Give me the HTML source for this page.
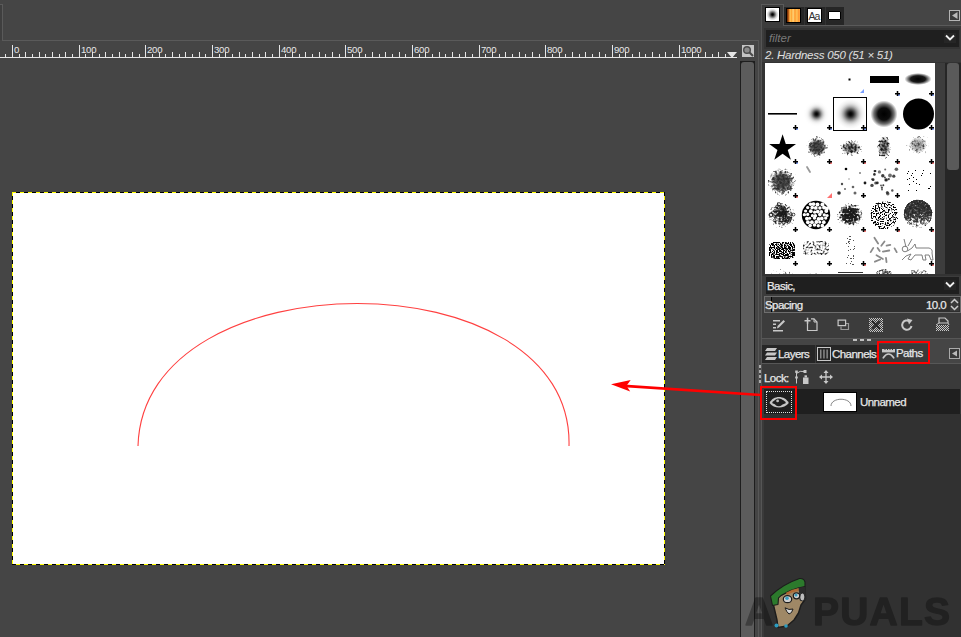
<!DOCTYPE html><html><head><meta charset="utf-8"><style>
*{margin:0;padding:0;box-sizing:border-box}
html,body{width:961px;height:637px;overflow:hidden;background:#454545;font-family:"Liberation Sans", sans-serif;}
.a{position:absolute}
.rl{position:absolute;top:44px;font-size:9.6px;color:#e8e8e8;line-height:12px;letter-spacing:-0.25px}
.t{position:absolute;font-size:11.5px;color:#e6e6e6;line-height:13px;white-space:nowrap;letter-spacing:-0.55px;-webkit-text-stroke:0.25px currentColor}
</style></head><body><div class="a" style="left:0;top:5px;width:2px;height:35px;background:#3f3f3f"></div><div class="a" style="left:0;top:4px;width:3px;height:1px;background:#5a5a5a"></div><div class="a" style="left:2px;top:4px;width:1px;height:37px;background:#5a5a5a"></div><div class="a" style="left:2px;top:40px;width:757px;height:1px;background:#5a5a5a"></div><div class="a" style="left:758px;top:40px;width:1px;height:597px;background:#575757"></div><div class="a" style="left:761px;top:4px;width:1px;height:633px;background:#555"></div><svg style="position:absolute;left:0;top:41px" width="740" height="20" shape-rendering="crispEdges"><rect x="0" y="16" width="737" height="1" fill="#e6e6e6"/><rect x="5" y="13" width="1" height="3" fill="#e6e6e6"/><rect x="12" y="4" width="1" height="12" fill="#e6e6e6"/><rect x="19" y="13" width="1" height="3" fill="#e6e6e6"/><rect x="25" y="11" width="1" height="5" fill="#e6e6e6"/><rect x="32" y="13" width="1" height="3" fill="#e6e6e6"/><rect x="39" y="11" width="1" height="5" fill="#e6e6e6"/><rect x="45" y="13" width="1" height="3" fill="#e6e6e6"/><rect x="52" y="11" width="1" height="5" fill="#e6e6e6"/><rect x="59" y="13" width="1" height="3" fill="#e6e6e6"/><rect x="65" y="11" width="1" height="5" fill="#e6e6e6"/><rect x="72" y="13" width="1" height="3" fill="#e6e6e6"/><rect x="79" y="4" width="1" height="12" fill="#e6e6e6"/><rect x="85" y="13" width="1" height="3" fill="#e6e6e6"/><rect x="92" y="11" width="1" height="5" fill="#e6e6e6"/><rect x="99" y="13" width="1" height="3" fill="#e6e6e6"/><rect x="105" y="11" width="1" height="5" fill="#e6e6e6"/><rect x="112" y="13" width="1" height="3" fill="#e6e6e6"/><rect x="119" y="11" width="1" height="5" fill="#e6e6e6"/><rect x="125" y="13" width="1" height="3" fill="#e6e6e6"/><rect x="132" y="11" width="1" height="5" fill="#e6e6e6"/><rect x="139" y="13" width="1" height="3" fill="#e6e6e6"/><rect x="145" y="4" width="1" height="12" fill="#e6e6e6"/><rect x="152" y="13" width="1" height="3" fill="#e6e6e6"/><rect x="159" y="11" width="1" height="5" fill="#e6e6e6"/><rect x="165" y="13" width="1" height="3" fill="#e6e6e6"/><rect x="172" y="11" width="1" height="5" fill="#e6e6e6"/><rect x="179" y="13" width="1" height="3" fill="#e6e6e6"/><rect x="185" y="11" width="1" height="5" fill="#e6e6e6"/><rect x="192" y="13" width="1" height="3" fill="#e6e6e6"/><rect x="199" y="11" width="1" height="5" fill="#e6e6e6"/><rect x="205" y="13" width="1" height="3" fill="#e6e6e6"/><rect x="212" y="4" width="1" height="12" fill="#e6e6e6"/><rect x="219" y="13" width="1" height="3" fill="#e6e6e6"/><rect x="225" y="11" width="1" height="5" fill="#e6e6e6"/><rect x="232" y="13" width="1" height="3" fill="#e6e6e6"/><rect x="239" y="11" width="1" height="5" fill="#e6e6e6"/><rect x="245" y="13" width="1" height="3" fill="#e6e6e6"/><rect x="252" y="11" width="1" height="5" fill="#e6e6e6"/><rect x="259" y="13" width="1" height="3" fill="#e6e6e6"/><rect x="265" y="11" width="1" height="5" fill="#e6e6e6"/><rect x="272" y="13" width="1" height="3" fill="#e6e6e6"/><rect x="279" y="4" width="1" height="12" fill="#e6e6e6"/><rect x="285" y="13" width="1" height="3" fill="#e6e6e6"/><rect x="292" y="11" width="1" height="5" fill="#e6e6e6"/><rect x="299" y="13" width="1" height="3" fill="#e6e6e6"/><rect x="305" y="11" width="1" height="5" fill="#e6e6e6"/><rect x="312" y="13" width="1" height="3" fill="#e6e6e6"/><rect x="319" y="11" width="1" height="5" fill="#e6e6e6"/><rect x="325" y="13" width="1" height="3" fill="#e6e6e6"/><rect x="332" y="11" width="1" height="5" fill="#e6e6e6"/><rect x="339" y="13" width="1" height="3" fill="#e6e6e6"/><rect x="345" y="4" width="1" height="12" fill="#e6e6e6"/><rect x="352" y="13" width="1" height="3" fill="#e6e6e6"/><rect x="359" y="11" width="1" height="5" fill="#e6e6e6"/><rect x="365" y="13" width="1" height="3" fill="#e6e6e6"/><rect x="372" y="11" width="1" height="5" fill="#e6e6e6"/><rect x="379" y="13" width="1" height="3" fill="#e6e6e6"/><rect x="385" y="11" width="1" height="5" fill="#e6e6e6"/><rect x="392" y="13" width="1" height="3" fill="#e6e6e6"/><rect x="399" y="11" width="1" height="5" fill="#e6e6e6"/><rect x="405" y="13" width="1" height="3" fill="#e6e6e6"/><rect x="412" y="4" width="1" height="12" fill="#e6e6e6"/><rect x="419" y="13" width="1" height="3" fill="#e6e6e6"/><rect x="425" y="11" width="1" height="5" fill="#e6e6e6"/><rect x="432" y="13" width="1" height="3" fill="#e6e6e6"/><rect x="439" y="11" width="1" height="5" fill="#e6e6e6"/><rect x="445" y="13" width="1" height="3" fill="#e6e6e6"/><rect x="452" y="11" width="1" height="5" fill="#e6e6e6"/><rect x="459" y="13" width="1" height="3" fill="#e6e6e6"/><rect x="465" y="11" width="1" height="5" fill="#e6e6e6"/><rect x="472" y="13" width="1" height="3" fill="#e6e6e6"/><rect x="479" y="4" width="1" height="12" fill="#e6e6e6"/><rect x="485" y="13" width="1" height="3" fill="#e6e6e6"/><rect x="492" y="11" width="1" height="5" fill="#e6e6e6"/><rect x="499" y="13" width="1" height="3" fill="#e6e6e6"/><rect x="505" y="11" width="1" height="5" fill="#e6e6e6"/><rect x="512" y="13" width="1" height="3" fill="#e6e6e6"/><rect x="519" y="11" width="1" height="5" fill="#e6e6e6"/><rect x="525" y="13" width="1" height="3" fill="#e6e6e6"/><rect x="532" y="11" width="1" height="5" fill="#e6e6e6"/><rect x="539" y="13" width="1" height="3" fill="#e6e6e6"/><rect x="545" y="4" width="1" height="12" fill="#e6e6e6"/><rect x="552" y="13" width="1" height="3" fill="#e6e6e6"/><rect x="559" y="11" width="1" height="5" fill="#e6e6e6"/><rect x="565" y="13" width="1" height="3" fill="#e6e6e6"/><rect x="572" y="11" width="1" height="5" fill="#e6e6e6"/><rect x="579" y="13" width="1" height="3" fill="#e6e6e6"/><rect x="585" y="11" width="1" height="5" fill="#e6e6e6"/><rect x="592" y="13" width="1" height="3" fill="#e6e6e6"/><rect x="599" y="11" width="1" height="5" fill="#e6e6e6"/><rect x="605" y="13" width="1" height="3" fill="#e6e6e6"/><rect x="612" y="4" width="1" height="12" fill="#e6e6e6"/><rect x="619" y="13" width="1" height="3" fill="#e6e6e6"/><rect x="625" y="11" width="1" height="5" fill="#e6e6e6"/><rect x="632" y="13" width="1" height="3" fill="#e6e6e6"/><rect x="639" y="11" width="1" height="5" fill="#e6e6e6"/><rect x="645" y="13" width="1" height="3" fill="#e6e6e6"/><rect x="652" y="11" width="1" height="5" fill="#e6e6e6"/><rect x="659" y="13" width="1" height="3" fill="#e6e6e6"/><rect x="665" y="11" width="1" height="5" fill="#e6e6e6"/><rect x="672" y="13" width="1" height="3" fill="#e6e6e6"/><rect x="679" y="4" width="1" height="12" fill="#e6e6e6"/><rect x="685" y="13" width="1" height="3" fill="#e6e6e6"/><rect x="692" y="11" width="1" height="5" fill="#e6e6e6"/><rect x="698" y="13" width="1" height="3" fill="#e6e6e6"/><rect x="705" y="11" width="1" height="5" fill="#e6e6e6"/><rect x="712" y="13" width="1" height="3" fill="#e6e6e6"/><rect x="718" y="11" width="1" height="5" fill="#e6e6e6"/><rect x="725" y="13" width="1" height="3" fill="#e6e6e6"/><rect x="732" y="11" width="1" height="5" fill="#e6e6e6"/></svg><div class="rl" style="left:14px">0</div><div class="rl" style="left:81px">100</div><div class="rl" style="left:147px">200</div><div class="rl" style="left:214px">300</div><div class="rl" style="left:281px">400</div><div class="rl" style="left:347px">500</div><div class="rl" style="left:414px">600</div><div class="rl" style="left:481px">700</div><div class="rl" style="left:547px">800</div><div class="rl" style="left:614px">900</div><div class="rl" style="left:681px">1000</div><svg style="position:absolute;left:726px;top:51px" width="12" height="8"><polygon points="1,1 11,1 6,7" fill="#e6e6e6"/></svg><div class="a" style="left:742px;top:45px;width:12px;height:12px;background:#c4c4c4"></div><svg class="a" style="left:742px;top:45px" width="12" height="12"><circle cx="5" cy="5" r="3.3" fill="#8a8a8a" stroke="#4a4a4a" stroke-width="1.4"/><line x1="7.3" y1="7.3" x2="11" y2="11" stroke="#4a4a4a" stroke-width="2"/></svg><div class="a" style="left:740px;top:61px;width:15px;height:576px;background:#1e1e1e"></div><div class="a" style="left:741px;top:62px;width:13px;height:575px;background:#5c5c5c;border-radius:3px 3px 0 0"></div><div class="a" style="left:12px;top:192px;width:653px;height:373px;background:#fff;border:1px dashed #000"></div><svg class="a" style="left:0;top:0" width="740" height="637"><defs><pattern id="dh" width="8" height="1" patternUnits="userSpaceOnUse"><rect width="4" height="1" fill="#000"/><rect x="4" width="4" height="1" fill="#ffff00"/></pattern><pattern id="dv" width="1" height="8" patternUnits="userSpaceOnUse"><rect width="1" height="4" fill="#000"/><rect y="4" width="1" height="4" fill="#ffff00"/></pattern><pattern id="dh2" width="8" height="1" patternUnits="userSpaceOnUse"><rect width="4" height="1" fill="#ffff00"/><rect x="4" width="4" height="1" fill="#000"/></pattern><pattern id="dv2" width="1" height="8" patternUnits="userSpaceOnUse"><rect width="1" height="4" fill="#ffff00"/><rect y="4" width="1" height="4" fill="#000"/></pattern></defs><g shape-rendering="crispEdges"><rect x="12" y="192" width="1" height="373" fill="url(#dv2)"/><rect x="664" y="192" width="1" height="373" fill="url(#dv)"/><rect x="12" y="192" width="653" height="1" fill="url(#dh)"/><rect x="12" y="564" width="653" height="1" fill="url(#dh2)"/></g><path d="M138,446 C143,256 574,256 569,446" fill="none" stroke="#ff4040" stroke-width="1.1"/></svg><div class="a" style="left:761px;top:4px;width:23px;height:1px;background:#5a5a5a"></div><div class="a" style="left:783px;top:4px;width:1px;height:22px;background:#5a5a5a"></div><div class="a" style="left:762px;top:5px;width:21px;height:21px;background:#3c3c3c"></div><div class="a" style="left:784px;top:7px;width:60px;height:18px;background:#262626"></div><div class="a" style="left:804px;top:7px;width:1px;height:18px;background:#333"></div><div class="a" style="left:825px;top:7px;width:1px;height:18px;background:#333"></div><div class="a" style="left:783px;top:25px;width:178px;height:1px;background:#5a5a5a"></div><svg class="a" style="left:765px;top:7px" width="15" height="15"><defs><radialGradient id="bi"><stop offset="0" stop-color="#000"/><stop offset=".15" stop-color="#000" stop-opacity=".95"/><stop offset=".4" stop-color="#000" stop-opacity=".6"/><stop offset=".7" stop-color="#000" stop-opacity=".2"/><stop offset="1" stop-color="#000" stop-opacity="0"/></radialGradient></defs><rect x="0.5" y="0.5" width="14" height="14" fill="#fff" stroke="#000"/><circle cx="7.5" cy="7.5" r="6" fill="url(#bi)"/></svg><svg class="a" style="left:786px;top:8px" width="15" height="15"><defs><linearGradient id="gi"><stop offset="0" stop-color="#5a2204"/><stop offset=".1" stop-color="#8a3a08"/><stop offset=".2" stop-color="#e8862a"/><stop offset=".25" stop-color="#ffcc60"/><stop offset=".36" stop-color="#ffa838"/><stop offset=".48" stop-color="#ffd478"/><stop offset=".6" stop-color="#ff9a30"/><stop offset=".74" stop-color="#ffc458"/><stop offset=".88" stop-color="#ff9230"/><stop offset="1" stop-color="#ffbc50"/></linearGradient></defs><rect x="0.5" y="0.5" width="14" height="14" fill="url(#gi)" stroke="#000"/></svg><div class="a" style="left:807px;top:8px;width:15px;height:15px;background:#fff;border:1px solid #000;font-size:10.5px;line-height:14px;color:#333;text-align:center;letter-spacing:-0.8px;text-indent:-1px">Aa</div><div class="a" style="left:828px;top:11px;width:13px;height:9px;background:#fff;border:1px solid #000;border-radius:1px"></div><svg class="a" style="left:949px;top:10px" width="11" height="11"><rect x="0.5" y="0.5" width="10" height="10" fill="#3a3a3a" stroke="#b4b4b4"/><polygon points="8.5,2 8.5,9 3,5.5" fill="#b8b8b8"/></svg><div class="a" style="left:762px;top:26px;width:199px;height:312px;background:#3c3c3c"></div><div class="a" style="left:764px;top:28px;width:196px;height:21px;background:#343434"></div><div class="a" style="left:766px;top:30px;width:193px;height:17px;background:#1f1f1f"></div><div class="t" style="left:769px;top:32px;font-style:italic;color:#7a7a7a;font-size:11.5px;-webkit-text-stroke:0;letter-spacing:0">filter</div><div class="a" style="left:944px;top:33px;width:12px;height:10px;background:#262626"></div><svg class="a" style="left:945px;top:34px" width="10" height="8"><polyline points="1,1.5 5,5.5 9,1.5" fill="none" stroke="#f0f0f0" stroke-width="1.8"/></svg><div class="t" style="left:765px;top:49px;font-style:italic;color:#e0e0e0;font-size:11.5px;letter-spacing:-0.25px;-webkit-text-stroke:0">2. Hardness 050 (51 × 51)</div><div class="a" style="left:762px;top:62px;width:199px;height:214px;background:#333"></div><svg style="position:absolute;left:765px;top:63px" width="170" height="211"><defs><radialGradient id="gA"><stop offset="0.00" stop-color="#000" stop-opacity="1.000"/><stop offset="0.10" stop-color="#000" stop-opacity="0.938"/><stop offset="0.20" stop-color="#000" stop-opacity="0.775"/><stop offset="0.30" stop-color="#000" stop-opacity="0.563"/><stop offset="0.40" stop-color="#000" stop-opacity="0.360"/><stop offset="0.50" stop-color="#000" stop-opacity="0.203"/><stop offset="0.60" stop-color="#000" stop-opacity="0.101"/><stop offset="0.70" stop-color="#000" stop-opacity="0.044"/><stop offset="0.80" stop-color="#000" stop-opacity="0.017"/><stop offset="0.90" stop-color="#000" stop-opacity="0.006"/><stop offset="1.00" stop-color="#000" stop-opacity="0.000"/></radialGradient><radialGradient id="gB"><stop offset="0.00" stop-color="#000" stop-opacity="1.000"/><stop offset="0.10" stop-color="#000" stop-opacity="0.955"/><stop offset="0.20" stop-color="#000" stop-opacity="0.832"/><stop offset="0.30" stop-color="#000" stop-opacity="0.662"/><stop offset="0.40" stop-color="#000" stop-opacity="0.480"/><stop offset="0.50" stop-color="#000" stop-opacity="0.317"/><stop offset="0.60" stop-color="#000" stop-opacity="0.191"/><stop offset="0.70" stop-color="#000" stop-opacity="0.105"/><stop offset="0.80" stop-color="#000" stop-opacity="0.053"/><stop offset="0.90" stop-color="#000" stop-opacity="0.024"/><stop offset="1.00" stop-color="#000" stop-opacity="0.000"/></radialGradient><radialGradient id="gC"><stop offset="0.00" stop-color="#000" stop-opacity="1.000"/><stop offset="0.10" stop-color="#000" stop-opacity="1.000"/><stop offset="0.20" stop-color="#000" stop-opacity="1.000"/><stop offset="0.30" stop-color="#000" stop-opacity="1.000"/><stop offset="0.40" stop-color="#000" stop-opacity="1.000"/><stop offset="0.50" stop-color="#000" stop-opacity="0.863"/><stop offset="0.60" stop-color="#000" stop-opacity="0.658"/><stop offset="0.70" stop-color="#000" stop-opacity="0.477"/><stop offset="0.80" stop-color="#000" stop-opacity="0.329"/><stop offset="0.90" stop-color="#000" stop-opacity="0.217"/><stop offset="1.00" stop-color="#000" stop-opacity="0.000"/></radialGradient><radialGradient id="gD"><stop offset="0.00" stop-color="#000" stop-opacity="0.800"/><stop offset="0.10" stop-color="#000" stop-opacity="0.775"/><stop offset="0.20" stop-color="#000" stop-opacity="0.706"/><stop offset="0.30" stop-color="#000" stop-opacity="0.604"/><stop offset="0.40" stop-color="#000" stop-opacity="0.485"/><stop offset="0.50" stop-color="#000" stop-opacity="0.366"/><stop offset="0.60" stop-color="#000" stop-opacity="0.260"/><stop offset="0.70" stop-color="#000" stop-opacity="0.173"/><stop offset="0.80" stop-color="#000" stop-opacity="0.108"/><stop offset="0.90" stop-color="#000" stop-opacity="0.064"/><stop offset="1.00" stop-color="#000" stop-opacity="0.000"/></radialGradient><radialGradient id="gE"><stop offset="0" stop-color="#000" stop-opacity="1"/><stop offset="0.45" stop-color="#000" stop-opacity="0.95"/><stop offset="0.75" stop-color="#000" stop-opacity="0.55"/><stop offset="1" stop-color="#000" stop-opacity="0"/></radialGradient><radialGradient id="gF"><stop offset="0" stop-color="#000" stop-opacity="1"/><stop offset="0.55" stop-color="#000" stop-opacity="0.9"/><stop offset="1" stop-color="#000" stop-opacity="0"/></radialGradient><radialGradient id="u1"><stop offset="0" stop-color="#000" stop-opacity="1"/><stop offset="0.5" stop-color="#000" stop-opacity="0.85"/><stop offset="1" stop-color="#000" stop-opacity="0"/></radialGradient><radialGradient id="u2"><stop offset="0" stop-color="#000" stop-opacity="0.6"/><stop offset="0.5" stop-color="#000" stop-opacity="0.45"/><stop offset="1" stop-color="#000" stop-opacity="0"/></radialGradient><radialGradient id="u3"><stop offset="0" stop-color="#000" stop-opacity="0.55"/><stop offset="0.5" stop-color="#000" stop-opacity="0.35"/><stop offset="1" stop-color="#000" stop-opacity="0"/></radialGradient><radialGradient id="p1"><stop offset="0" stop-color="#000" stop-opacity="0.95"/><stop offset="0.5" stop-color="#000" stop-opacity="0.8"/><stop offset="0.8" stop-color="#000" stop-opacity="0.5"/><stop offset="1" stop-color="#000" stop-opacity="0.2"/></radialGradient><radialGradient id="p2"><stop offset="0" stop-color="#000" stop-opacity="0.75"/><stop offset="0.6" stop-color="#000" stop-opacity="0.6"/><stop offset="0.85" stop-color="#000" stop-opacity="0.45"/><stop offset="1" stop-color="#000" stop-opacity="0.15"/></radialGradient><radialGradient id="p3"><stop offset="0" stop-color="#000" stop-opacity="0.62"/><stop offset="0.6" stop-color="#000" stop-opacity="0.5"/><stop offset="1" stop-color="#000" stop-opacity="0.2"/></radialGradient><radialGradient id="p4"><stop offset="0" stop-color="#000" stop-opacity="0.95"/><stop offset="0.5" stop-color="#000" stop-opacity="0.8"/><stop offset="0.8" stop-color="#000" stop-opacity="0.5"/><stop offset="1" stop-color="#000" stop-opacity="0.2"/></radialGradient><filter id="f1" x="-20%" y="-20%" width="140%" height="140%" color-interpolation-filters="sRGB"><feTurbulence type="fractalNoise" baseFrequency="0.45" numOctaves="3" seed="2" result="n"/><feColorMatrix in="n" type="matrix" values="0 0 0 0 0  0 0 0 0 0  0 0 0 0 0  1 0 0 0 0" result="na"/><feComposite in="SourceGraphic" in2="na" operator="arithmetic" k1="0" k2="1" k3="-1" k4="0.12" result="d"/><feComponentTransfer in="d"><feFuncA type="linear" slope="2.2" intercept="0"/></feComponentTransfer><feGaussianBlur stdDeviation="0.7"/></filter><filter id="f2" x="-20%" y="-20%" width="140%" height="140%" color-interpolation-filters="sRGB"><feTurbulence type="fractalNoise" baseFrequency="0.5" numOctaves="3" seed="5" result="n"/><feColorMatrix in="n" type="matrix" values="0 0 0 0 0  0 0 0 0 0  0 0 0 0 0  1 0 0 0 0" result="na"/><feComposite in="SourceGraphic" in2="na" operator="arithmetic" k1="0" k2="1" k3="-1" k4="0.05" result="d"/><feComponentTransfer in="d"><feFuncA type="linear" slope="3" intercept="0"/></feComponentTransfer><feGaussianBlur stdDeviation="0.6"/></filter><filter id="f3" x="-20%" y="-20%" width="140%" height="140%" color-interpolation-filters="sRGB"><feTurbulence type="fractalNoise" baseFrequency="0.4" numOctaves="3" seed="9" result="n"/><feColorMatrix in="n" type="matrix" values="0 0 0 0 0  0 0 0 0 0  0 0 0 0 0  1 0 0 0 0" result="na"/><feComposite in="SourceGraphic" in2="na" operator="arithmetic" k1="0" k2="1" k3="-1" k4="0.12" result="d"/><feComponentTransfer in="d"><feFuncA type="linear" slope="2.4" intercept="0"/></feComponentTransfer><feGaussianBlur stdDeviation="0.7"/></filter><filter id="f4" x="-20%" y="-20%" width="140%" height="140%" color-interpolation-filters="sRGB"><feTurbulence type="fractalNoise" baseFrequency="0.37" numOctaves="2" seed="13" result="n"/><feColorMatrix in="n" type="matrix" values="0 0 0 0 0  0 0 0 0 0  0 0 0 0 0  1 0 0 0 0" result="na"/><feComposite in="SourceGraphic" in2="na" operator="arithmetic" k1="0" k2="1" k3="-1" k4="0" result="d"/><feComponentTransfer in="d"><feFuncA type="linear" slope="6" intercept="0"/></feComponentTransfer><feGaussianBlur stdDeviation="0.45"/></filter><filter id="f5" x="-20%" y="-20%" width="140%" height="140%" color-interpolation-filters="sRGB"><feTurbulence type="fractalNoise" baseFrequency="0.77" numOctaves="2" seed="17" result="n"/><feColorMatrix in="n" type="matrix" values="0 0 0 0 0  0 0 0 0 0  0 0 0 0 0  1 0 0 0 0" result="na"/><feComposite in="SourceGraphic" in2="na" operator="arithmetic" k1="0" k2="1" k3="-1" k4="0" result="d"/><feComponentTransfer in="d"><feFuncA type="linear" slope="12" intercept="0"/></feComponentTransfer><feGaussianBlur stdDeviation="0.3"/></filter></defs><rect width="170" height="211" fill="#fff"/><rect x="83.5" y="15.5" width="2" height="2" fill="#000"/><rect x="105" y="13" width="29" height="7" fill="#000"/><ellipse cx="153" cy="16" rx="13.5" ry="6" fill="url(#gF)"/><polygon points="95,30 99,26 99,30" fill="#7aa0ff"/><rect x="3" y="50" width="29" height="1.6" fill="#000"/><circle cx="51.5" cy="51" r="13" fill="url(#gA)"/><circle cx="85.5" cy="51" r="15" fill="url(#gB)"/><rect x="68.5" y="34.5" width="33" height="33" fill="none" stroke="#000" stroke-width="1"/><circle cx="119" cy="51" r="13.5" fill="url(#gE)"/><circle cx="153.5" cy="51" r="15.5" fill="#000"/><polygon points="17.60,71.30 20.77,81.03 31.01,81.04 22.74,87.07 25.89,96.81 17.60,90.80 9.31,96.81 12.46,87.07 4.19,81.04 14.43,81.03" fill="#000"/><ellipse cx="52" cy="84" rx="9" ry="8.5" fill="url(#u1)"/><ellipse cx="86" cy="85" rx="10" ry="6" fill="url(#u2)"/><ellipse cx="119" cy="84" rx="6" ry="10" fill="url(#u2)"/><ellipse cx="153" cy="82" rx="9" ry="8" fill="url(#u3)"/><ellipse cx="17" cy="119" rx="11" ry="11" fill="url(#u1)"/><g filter="url(#f1)"><circle cx="52" cy="84" r="12" fill="url(#p1)"/></g><g filter="url(#f2)"><ellipse cx="86" cy="85" rx="13" ry="9" fill="url(#p2)"/></g><g filter="url(#f2)"><ellipse cx="119" cy="84" rx="8" ry="14" fill="url(#p2)"/></g><g filter="url(#f1)"><ellipse cx="153" cy="82" rx="13" ry="12" fill="url(#p3)"/></g><g filter="url(#f3)"><circle cx="17" cy="119" r="16" fill="url(#p4)"/></g><line x1="42" y1="104" x2="45" y2="109" stroke="#999" stroke-width="1.8" stroke-linecap="round"/><polygon points="62,135 67,130 67,135" fill="#ff7070"/><circle cx="81" cy="106" r="1.3" fill="#000" fill-opacity="1"/><circle cx="95" cy="110" r="1" fill="#000" fill-opacity="0.5"/><circle cx="77" cy="121" r="1.2" fill="#000" fill-opacity="0.7"/><circle cx="88" cy="124" r="1.3" fill="#000" fill-opacity="0.6"/><circle cx="100" cy="120" r="1.4" fill="#000" fill-opacity="0.9"/><circle cx="74" cy="130" r="1.8" fill="#000" fill-opacity="0.8"/><circle cx="90" cy="130" r="1.5" fill="#000" fill-opacity="0.6"/><circle cx="80" cy="126" r="1" fill="#000" fill-opacity="0.6"/><circle cx="84" cy="116" r="0.8" fill="#000" fill-opacity="0.4"/><circle cx="114.4" cy="108.9" r="1.6" fill="#222" fill-opacity="0.63"/><circle cx="119.9" cy="114.5" r="1.0" fill="#222" fill-opacity="0.80"/><circle cx="107.0" cy="116.3" r="1.0" fill="#222" fill-opacity="0.64"/><circle cx="117.0" cy="126.5" r="1.0" fill="#222" fill-opacity="0.69"/><circle cx="122.3" cy="129.6" r="1.5" fill="#222" fill-opacity="0.76"/><circle cx="131.4" cy="106.2" r="1.8" fill="#222" fill-opacity="0.72"/><circle cx="109.8" cy="108.1" r="1.2" fill="#222" fill-opacity="0.93"/><circle cx="110.7" cy="120.1" r="1.5" fill="#222" fill-opacity="0.75"/><circle cx="120.2" cy="106.6" r="1.0" fill="#222" fill-opacity="0.68"/><circle cx="123.7" cy="116.1" r="1.2" fill="#222" fill-opacity="0.83"/><circle cx="117.8" cy="112.8" r="1.7" fill="#222" fill-opacity="0.88"/><circle cx="112.3" cy="119.9" r="1.4" fill="#222" fill-opacity="0.95"/><circle cx="125.0" cy="112.5" r="1.9" fill="#222" fill-opacity="0.65"/><circle cx="116.9" cy="124.7" r="1.1" fill="#222" fill-opacity="0.80"/><circle cx="107.0" cy="122.4" r="1.7" fill="#222" fill-opacity="0.83"/><circle cx="128.8" cy="113.2" r="1.6" fill="#222" fill-opacity="0.84"/><circle cx="121.1" cy="116.9" r="1.7" fill="#222" fill-opacity="0.98"/><circle cx="118.3" cy="122.3" r="1.0" fill="#222" fill-opacity="0.88"/><circle cx="122.8" cy="130.8" r="1.7" fill="#222" fill-opacity="0.71"/><circle cx="116.0" cy="122.4" r="0.9" fill="#222" fill-opacity="0.78"/><circle cx="110.4" cy="108.0" r="1.0" fill="#222" fill-opacity="0.91"/><circle cx="109.4" cy="111.4" r="1.3" fill="#222" fill-opacity="0.95"/><circle cx="108.1" cy="116.7" r="1.4" fill="#222" fill-opacity="0.95"/><circle cx="127.3" cy="127.5" r="1.2" fill="#222" fill-opacity="0.77"/><rect x="151" y="127" width="1" height="1" fill="#000"/><rect x="165" y="110" width="1" height="1" fill="#000"/><rect x="146" y="112" width="1" height="1" fill="#000"/><rect x="148" y="118" width="1" height="1" fill="#000"/><rect x="156" y="112" width="1" height="1" fill="#000"/><rect x="142" y="116" width="1" height="1" fill="#000"/><rect x="151" y="120" width="1" height="1" fill="#000"/><rect x="165" y="123" width="1" height="1" fill="#000"/><rect x="154" y="121" width="1" height="1" fill="#000"/><rect x="158" y="107" width="1" height="1" fill="#000"/><rect x="164" y="125" width="1" height="1" fill="#000"/><rect x="163" y="125" width="1" height="1" fill="#000"/><rect x="151" y="116" width="1" height="1" fill="#000"/><rect x="144" y="121" width="1" height="1" fill="#000"/><rect x="143" y="108" width="1" height="1" fill="#000"/><rect x="147" y="110" width="1" height="1" fill="#000"/><rect x="150" y="107" width="1" height="1" fill="#000"/><rect x="142" y="110" width="1" height="1" fill="#000"/><rect x="144" y="115" width="1" height="1" fill="#000"/><rect x="143" y="127" width="1" height="1" fill="#000"/><rect x="157" y="110" width="1" height="1" fill="#000"/><rect x="148" y="114" width="1" height="1" fill="#000"/><g filter="url(#f2)"><circle cx="17" cy="152" r="15" fill="url(#p2)"/></g><circle cx="10.2" cy="153.6" r="1.5" fill="none" stroke="#1a1a1a" stroke-width="0.75"/><circle cx="17.6" cy="151.3" r="1.9" fill="none" stroke="#1a1a1a" stroke-width="0.75"/><circle cx="19.6" cy="150.1" r="1.9" fill="none" stroke="#1a1a1a" stroke-width="0.75"/><circle cx="15.3" cy="150.4" r="1.7" fill="none" stroke="#1a1a1a" stroke-width="0.75"/><circle cx="14.8" cy="144.6" r="2.1" fill="none" stroke="#1a1a1a" stroke-width="0.75"/><circle cx="20.1" cy="156.7" r="1.4" fill="none" stroke="#1a1a1a" stroke-width="0.75"/><circle cx="6.0" cy="151.6" r="1.9" fill="none" stroke="#1a1a1a" stroke-width="0.75"/><circle cx="18.1" cy="145.0" r="2.1" fill="none" stroke="#1a1a1a" stroke-width="0.75"/><circle cx="22.0" cy="155.7" r="2.0" fill="none" stroke="#1a1a1a" stroke-width="0.75"/><circle cx="15.9" cy="144.6" r="1.4" fill="none" stroke="#1a1a1a" stroke-width="0.75"/><circle cx="16.4" cy="157.2" r="1.6" fill="none" stroke="#1a1a1a" stroke-width="0.75"/><circle cx="18.9" cy="147.2" r="2.3" fill="none" stroke="#1a1a1a" stroke-width="0.75"/><circle cx="19.0" cy="150.1" r="1.7" fill="none" stroke="#1a1a1a" stroke-width="0.75"/><circle cx="15.2" cy="152.1" r="1.8" fill="none" stroke="#1a1a1a" stroke-width="0.75"/><circle cx="20.2" cy="149.9" r="2.0" fill="none" stroke="#1a1a1a" stroke-width="0.75"/><circle cx="23.3" cy="158.0" r="2.3" fill="none" stroke="#1a1a1a" stroke-width="0.75"/><circle cx="17.3" cy="153.0" r="1.4" fill="none" stroke="#1a1a1a" stroke-width="0.75"/><circle cx="15.5" cy="151.6" r="1.4" fill="none" stroke="#1a1a1a" stroke-width="0.75"/><circle cx="6.0" cy="152.2" r="1.8" fill="none" stroke="#1a1a1a" stroke-width="0.75"/><circle cx="9.6" cy="157.5" r="1.4" fill="none" stroke="#1a1a1a" stroke-width="0.75"/><circle cx="12.8" cy="149.7" r="2.0" fill="none" stroke="#1a1a1a" stroke-width="0.75"/><circle cx="19.6" cy="151.3" r="1.9" fill="none" stroke="#1a1a1a" stroke-width="0.75"/><circle cx="13.5" cy="149.2" r="1.6" fill="none" stroke="#1a1a1a" stroke-width="0.75"/><circle cx="28.5" cy="151.6" r="1.4" fill="none" stroke="#1a1a1a" stroke-width="0.75"/><circle cx="13.9" cy="141.2" r="1.6" fill="none" stroke="#1a1a1a" stroke-width="0.75"/><circle cx="15.2" cy="150.5" r="1.7" fill="none" stroke="#1a1a1a" stroke-width="0.75"/><circle cx="12.9" cy="144.1" r="2.2" fill="none" stroke="#1a1a1a" stroke-width="0.75"/><circle cx="22.8" cy="155.5" r="2.3" fill="none" stroke="#1a1a1a" stroke-width="0.75"/><circle cx="10.3" cy="148.1" r="1.7" fill="none" stroke="#1a1a1a" stroke-width="0.75"/><circle cx="25.7" cy="151.2" r="1.3" fill="none" stroke="#1a1a1a" stroke-width="0.75"/><circle cx="19.0" cy="145.7" r="1.8" fill="none" stroke="#1a1a1a" stroke-width="0.75"/><circle cx="18.7" cy="159.5" r="1.7" fill="none" stroke="#1a1a1a" stroke-width="0.75"/><circle cx="24.7" cy="156.8" r="1.4" fill="none" stroke="#1a1a1a" stroke-width="0.75"/><circle cx="17.4" cy="150.2" r="2.2" fill="none" stroke="#1a1a1a" stroke-width="0.75"/><circle cx="51" cy="152" r="14.2" fill="#000"/><circle cx="45.6" cy="141.3" r="1.81" fill="#fff"/><circle cx="48.5" cy="141.1" r="1.94" fill="#fff"/><circle cx="52.5" cy="141.4" r="1.99" fill="#fff"/><circle cx="57.4" cy="141.5" r="1.98" fill="#fff"/><circle cx="42.7" cy="144.6" r="1.65" fill="#fff"/><circle cx="47.2" cy="144.5" r="1.84" fill="#fff"/><circle cx="50.8" cy="144.9" r="1.91" fill="#fff"/><circle cx="54.9" cy="144.9" r="1.74" fill="#fff"/><circle cx="59.1" cy="144.6" r="1.99" fill="#fff"/><circle cx="62.0" cy="145.5" r="1.92" fill="#fff"/><circle cx="40.6" cy="148.0" r="1.59" fill="#fff"/><circle cx="45.8" cy="148.2" r="1.88" fill="#fff"/><circle cx="49.7" cy="149.2" r="1.67" fill="#fff"/><circle cx="52.7" cy="148.6" r="1.89" fill="#fff"/><circle cx="56.3" cy="148.9" r="1.90" fill="#fff"/><circle cx="61.3" cy="148.0" r="1.97" fill="#fff"/><circle cx="39.4" cy="151.7" r="1.66" fill="#fff"/><circle cx="42.7" cy="151.4" r="1.57" fill="#fff"/><circle cx="47.4" cy="152.7" r="1.58" fill="#fff"/><circle cx="50.4" cy="152.7" r="1.77" fill="#fff"/><circle cx="54.8" cy="151.6" r="1.80" fill="#fff"/><circle cx="59.3" cy="151.9" r="1.71" fill="#fff"/><circle cx="62.1" cy="152.6" r="1.52" fill="#fff"/><circle cx="41.9" cy="155.6" r="1.89" fill="#fff"/><circle cx="44.6" cy="155.3" r="1.57" fill="#fff"/><circle cx="49.5" cy="155.1" r="1.73" fill="#fff"/><circle cx="53.6" cy="155.9" r="1.99" fill="#fff"/><circle cx="56.8" cy="155.4" r="1.86" fill="#fff"/><circle cx="60.7" cy="155.1" r="1.70" fill="#fff"/><circle cx="42.9" cy="159.2" r="1.93" fill="#fff"/><circle cx="46.9" cy="159.2" r="1.89" fill="#fff"/><circle cx="51.3" cy="159.0" r="1.88" fill="#fff"/><circle cx="54.7" cy="159.1" r="1.64" fill="#fff"/><circle cx="58.8" cy="159.2" r="1.85" fill="#fff"/><circle cx="45.1" cy="162.6" r="1.82" fill="#fff"/><circle cx="49.5" cy="162.0" r="1.82" fill="#fff"/><circle cx="53.3" cy="162.7" r="1.68" fill="#fff"/><circle cx="57.3" cy="162.7" r="1.84" fill="#fff"/><g filter="url(#f2)"><ellipse cx="85" cy="152" rx="15" ry="13.5" fill="url(#p1)"/></g><g filter="url(#f5)"><circle cx="119" cy="152" r="14.5" fill="#000" fill-opacity=".5"/></g><defs><linearGradient id="lg5" x1="0" y1="0" x2="0" y2="1"><stop offset="0" stop-color="#000" stop-opacity="1"/><stop offset=".5" stop-color="#000" stop-opacity=".95"/><stop offset="1" stop-color="#000" stop-opacity=".45"/></linearGradient></defs><g filter="url(#f1)"><circle cx="153" cy="151" r="14.5" fill="url(#lg5)"/></g><g filter="url(#f5)"><rect x="3.5" y="179" width="27" height="17" rx="5" fill="#000" fill-opacity=".58"/></g><g filter="url(#f2)"><rect x="38" y="178" width="26" height="14" rx="2" fill="#000" fill-opacity=".55"/></g><rect x="84" y="176" width="1" height="1" fill="#555"/><rect x="88" y="201" width="1" height="1" fill="#555"/><rect x="85" y="186" width="1" height="1" fill="#555"/><rect x="82" y="175" width="1" height="1" fill="#555"/><rect x="84" y="180" width="1" height="1" fill="#555"/><rect x="88" y="177" width="1" height="1" fill="#555"/><rect x="81" y="200" width="1" height="1" fill="#555"/><rect x="85" y="176" width="1" height="1" fill="#555"/><rect x="85" y="173" width="1" height="1" fill="#555"/><rect x="85" y="200" width="1" height="1" fill="#555"/><rect x="88" y="192" width="1" height="1" fill="#555"/><rect x="83" y="183" width="1" height="1" fill="#555"/><rect x="82" y="194" width="1" height="1" fill="#555"/><rect x="85" y="195" width="1" height="1" fill="#555"/><rect x="84" y="178" width="1" height="1" fill="#555"/><rect x="87" y="201" width="1" height="1" fill="#555"/><rect x="88" y="195" width="1" height="1" fill="#555"/><rect x="88" y="193" width="1" height="1" fill="#555"/><rect x="83" y="187" width="1" height="1" fill="#555"/><rect x="84" y="173" width="1" height="1" fill="#555"/><rect x="81" y="180" width="1" height="1" fill="#555"/><rect x="83" y="192" width="1" height="1" fill="#555"/><rect x="89" y="185" width="1" height="1" fill="#555"/><rect x="88" y="201" width="1" height="1" fill="#555"/><rect x="89" y="183" width="1" height="1" fill="#555"/><rect x="83" y="179" width="1" height="1" fill="#555"/><rect x="83" y="178" width="1" height="1" fill="#555"/><rect x="86" y="198" width="1" height="1" fill="#555"/><rect x="88" y="186" width="1" height="1" fill="#555"/><rect x="86" y="195" width="1" height="1" fill="#555"/><line x1="109.4" y1="174.8" x2="113.1" y2="180.6" stroke="#8a8a8a" stroke-width="1.8" stroke-linecap="round"/><line x1="116.3" y1="182.7" x2="119.5" y2="178.5" stroke="#8a8a8a" stroke-width="1.8" stroke-linecap="round"/><line x1="121.6" y1="182.7" x2="125.3" y2="181.9" stroke="#8a8a8a" stroke-width="1.8" stroke-linecap="round"/><line x1="105.7" y1="189.1" x2="108.3" y2="184.9" stroke="#8a8a8a" stroke-width="1.8" stroke-linecap="round"/><line x1="112.6" y1="184.9" x2="114.7" y2="188" stroke="#8a8a8a" stroke-width="1.8" stroke-linecap="round"/><line x1="117.9" y1="188.6" x2="124.3" y2="187.5" stroke="#8a8a8a" stroke-width="1.8" stroke-linecap="round"/><line x1="129.6" y1="185.4" x2="131.7" y2="189.1" stroke="#8a8a8a" stroke-width="1.8" stroke-linecap="round"/><line x1="111.5" y1="192.3" x2="117.9" y2="196" stroke="#8a8a8a" stroke-width="1.8" stroke-linecap="round"/><line x1="109.9" y1="198.7" x2="115.2" y2="196.5" stroke="#8a8a8a" stroke-width="1.8" stroke-linecap="round"/><line x1="121" y1="195" x2="121.5" y2="199.2" stroke="#8a8a8a" stroke-width="1.8" stroke-linecap="round"/><g fill="none" stroke="#707070" stroke-width="0.9"><path d="M141,184 L139,176 M143,183 L147,176"/><circle cx="140" cy="186" r="2.8"/><path d="M142.5,188 L147,185 L150,181 L151,185 L164,185 Q168,186 167,190 L168,197 L166,197 L164,192 L160,192 L161,197 L158,197 L157,192 L150,192 L146,197 L143,196 L146,191 L141,193 L137,197"/></g><g filter="url(#f2)"><ellipse cx="17" cy="211" rx="13" ry="5" fill="#000" fill-opacity=".45"/></g><g filter="url(#f2)"><ellipse cx="51" cy="211" rx="10" ry="4" fill="#000" fill-opacity=".35"/></g><rect x="73" y="209" width="25" height="1" fill="#333"/><g filter="url(#f1)"><ellipse cx="119" cy="210" rx="8" ry="4" fill="#000" fill-opacity=".7"/></g><g filter="url(#f1)"><ellipse cx="153" cy="210" rx="10" ry="4" fill="#000" fill-opacity=".6"/></g><rect x="132" y="30" width="3" height="3" fill="#8aa8ff"/><rect x="130" y="30" width="5" height="1.5" fill="#000"/><rect x="131.75" y="28" width="1.5" height="5" fill="#000"/><rect x="166" y="30" width="3" height="3" fill="#8aa8ff"/><rect x="164" y="30" width="5" height="1.5" fill="#000"/><rect x="165.75" y="28" width="1.5" height="5" fill="#000"/><rect x="30" y="64" width="3" height="3" fill="#8aa8ff"/><rect x="28" y="64" width="5" height="1.5" fill="#000"/><rect x="29.75" y="62" width="1.5" height="5" fill="#000"/><rect x="64" y="64" width="3" height="3" fill="#8aa8ff"/><rect x="62" y="64" width="5" height="1.5" fill="#000"/><rect x="63.75" y="62" width="1.5" height="5" fill="#000"/><rect x="98" y="64" width="3" height="3" fill="#8aa8ff"/><rect x="96" y="64" width="5" height="1.5" fill="#000"/><rect x="97.75" y="62" width="1.5" height="5" fill="#000"/><rect x="132" y="64" width="3" height="3" fill="#8aa8ff"/><rect x="130" y="64" width="5" height="1.5" fill="#000"/><rect x="131.75" y="62" width="1.5" height="5" fill="#000"/><rect x="166" y="64" width="3" height="3" fill="#8aa8ff"/><rect x="164" y="64" width="5" height="1.5" fill="#000"/><rect x="165.75" y="62" width="1.5" height="5" fill="#000"/><rect x="30" y="98" width="3" height="3" fill="#8aa8ff"/><rect x="28" y="98" width="5" height="1.5" fill="#000"/><rect x="29.75" y="96" width="1.5" height="5" fill="#000"/><rect x="64" y="98" width="3" height="3" fill="#ff8080"/><rect x="62" y="98" width="5" height="1.5" fill="#000"/><rect x="63.75" y="96" width="1.5" height="5" fill="#000"/><rect x="98" y="98" width="3" height="3" fill="#ff8080"/><rect x="96" y="98" width="5" height="1.5" fill="#000"/><rect x="97.75" y="96" width="1.5" height="5" fill="#000"/><rect x="132" y="98" width="3" height="3" fill="#ff8080"/><rect x="130" y="98" width="5" height="1.5" fill="#000"/><rect x="131.75" y="96" width="1.5" height="5" fill="#000"/><rect x="166" y="98" width="3" height="3" fill="#ff8080"/><rect x="164" y="98" width="5" height="1.5" fill="#000"/><rect x="165.75" y="96" width="1.5" height="5" fill="#000"/><rect x="30" y="132" width="3" height="3" fill="#ff8080"/><rect x="28" y="132" width="5" height="1.5" fill="#000"/><rect x="29.75" y="130" width="1.5" height="5" fill="#000"/><rect x="96" y="132" width="5" height="1.5" fill="#000"/><rect x="97.75" y="130" width="1.5" height="5" fill="#000"/><rect x="130" y="132" width="5" height="1.5" fill="#000"/><rect x="131.75" y="130" width="1.5" height="5" fill="#000"/><rect x="28" y="166" width="5" height="1.5" fill="#000"/><rect x="29.75" y="164" width="1.5" height="5" fill="#000"/><rect x="62" y="166" width="5" height="1.5" fill="#000"/><rect x="63.75" y="164" width="1.5" height="5" fill="#000"/><rect x="98" y="166" width="3" height="3" fill="#ff8080"/><rect x="96" y="166" width="5" height="1.5" fill="#000"/><rect x="97.75" y="164" width="1.5" height="5" fill="#000"/><rect x="132" y="166" width="3" height="3" fill="#ff8080"/><rect x="130" y="166" width="5" height="1.5" fill="#000"/><rect x="131.75" y="164" width="1.5" height="5" fill="#000"/><rect x="166" y="166" width="3" height="3" fill="#ff8080"/><rect x="164" y="166" width="5" height="1.5" fill="#000"/><rect x="165.75" y="164" width="1.5" height="5" fill="#000"/><rect x="28" y="200" width="5" height="1.5" fill="#000"/><rect x="29.75" y="198" width="1.5" height="5" fill="#000"/><rect x="62" y="200" width="5" height="1.5" fill="#000"/><rect x="63.75" y="198" width="1.5" height="5" fill="#000"/><rect x="98" y="200" width="3" height="3" fill="#ff8080"/><rect x="96" y="200" width="5" height="1.5" fill="#000"/><rect x="97.75" y="198" width="1.5" height="5" fill="#000"/><rect x="166" y="200" width="3" height="3" fill="#ff8080"/><rect x="164" y="200" width="5" height="1.5" fill="#000"/><rect x="165.75" y="198" width="1.5" height="5" fill="#000"/></svg><div class="a" style="left:935px;top:63px;width:10px;height:211px;background:#3d3d3d"></div><div class="a" style="left:945px;top:63px;width:16px;height:211px;background:#262626"></div><div class="a" style="left:947px;top:63px;width:12px;height:107px;background:#5a5a5a;border-radius:3px"></div><div class="a" style="left:766px;top:277px;width:193px;height:17px;background:#1f1f1f"></div><div class="t" style="left:767px;top:280px;color:#e8e8e8">Basic,</div><div class="a" style="left:944px;top:280px;width:12px;height:10px;background:#262626"></div><svg class="a" style="left:945px;top:281px" width="10" height="8"><polyline points="1,1.5 5,5.5 9,1.5" fill="none" stroke="#f0f0f0" stroke-width="1.8"/></svg><div class="a" style="left:764px;top:296px;width:197px;height:17px;background:#2e2e2e;border:1px solid #6e6e6e"></div><div class="a" style="left:765px;top:297px;width:6px;height:15px;background:#474747"></div><div class="a" style="left:771px;top:297px;width:1px;height:15px;background:#000"></div><div class="t" style="left:765px;top:299px;color:#e8e8e8">Spacing</div><div class="t" style="left:926px;top:299px;color:#e8e8e8">10.0</div><div class="a" style="left:950px;top:298px;width:9px;height:13px;background:#3a3a3a"></div><svg class="a" style="left:949px;top:297px" width="11" height="15"><polyline points="2,6 5.5,2.5 9,6" fill="none" stroke="#ccc" stroke-width="1.5"/><polyline points="2,9 5.5,12.5 9,9" fill="none" stroke="#ccc" stroke-width="1.5"/></svg><svg class="a" style="left:772px;top:317px" width="14" height="15"><g fill="#c8c8c8"><rect x="1" y="3" width="7" height="1.5"/><rect x="1" y="6.5" width="3" height="1.5"/><rect x="1" y="10" width="3" height="1.5"/><rect x="1" y="13" width="10" height="1.5"/><polygon points="5,11.5 5.5,9 11.5,3 13,4.5 7,10.5"/></g></svg><svg class="a" style="left:804px;top:317px" width="15" height="16"><path d="M3.5,5 V13.5 H13 V5 L10,1.8 H7" fill="none" stroke="#c8c8c8" stroke-width="1.2"/><path d="M10,1.8 V5 H13" fill="none" stroke="#c8c8c8" stroke-width="1"/><rect x="0.5" y="3" width="6" height="1.5" fill="#c8c8c8"/><rect x="2.8" y="0.7" width="1.5" height="6" fill="#c8c8c8"/></svg><svg class="a" style="left:837px;top:319px" width="14" height="12"><path d="M4,7.5 V10.5 H11.5 V4.5 H9" fill="none" stroke="#9a9a9a" stroke-width="1.2"/><rect x="1.1" y="1.1" width="7.5" height="5.5" fill="none" stroke="#c8c8c8" stroke-width="1.2"/></svg><svg class="a" style="left:869px;top:318px" width="14" height="14"><defs><pattern id="ck" width="2" height="2" patternUnits="userSpaceOnUse"><rect width="1" height="1" fill="#c8c8c8"/><rect x="1" y="1" width="1" height="1" fill="#c8c8c8"/></pattern></defs><rect x="0" y="0" width="14" height="14" fill="url(#ck)"/><path d="M3,3 L11,11 M11,3 L3,11" stroke="#2a2a2a" stroke-width="2.2"/></svg><svg class="a" style="left:900px;top:318px" width="14" height="14"><path d="M11.5,8 A4.7,4.7 0 1 1 9.5,3.2" fill="none" stroke="#c8c8c8" stroke-width="2"/><polygon points="7,0.5 12.5,2 9,6.5" fill="#c8c8c8"/></svg><svg class="a" style="left:935px;top:317px" width="15" height="15"><path d="M4,6 v-5 h6 l3,3 v2" fill="none" stroke="#c8c8c8" stroke-width="1.2"/><rect x="1" y="8" width="13" height="6" fill="url(#ck)"/><path d="M1,8 l3,-2 h9 l1,2" fill="none" stroke="#c8c8c8" stroke-width="1"/></svg><div class="a" style="left:761px;top:338px;width:200px;height:1px;background:#575757"></div><div class="a" style="left:853px;top:339px;width:4px;height:2px;background:#c0c0c0"></div><div class="a" style="left:860px;top:339px;width:4px;height:2px;background:#c0c0c0"></div><div class="a" style="left:867px;top:339px;width:4px;height:2px;background:#c0c0c0"></div><div class="a" style="left:762px;top:345px;width:115px;height:18px;background:#262626"></div><div class="a" style="left:815px;top:345px;width:1px;height:18px;background:#3a3a3a"></div><div class="a" style="left:877px;top:344px;width:53px;height:19px;background:#3a3a3a"></div><div class="a" style="left:761px;top:363px;width:200px;height:1px;background:#575757"></div><div class="a" style="left:762px;top:364px;width:199px;height:273px;background:#3a3a3a"></div><div class="a" style="left:764px;top:414px;width:197px;height:223px;background:#313131"></div><svg class="a" style="left:764px;top:347px" width="14" height="14"><g fill="#c8c8c8"><polygon points="3,1 13,1 11,4 1,4"/><polygon points="3,5.5 13,5.5 11,8.5 1,8.5"/><polygon points="3,10 13,10 11,13 1,13"/></g></svg><div class="t" style="left:778px;top:348px">Layers</div><svg class="a" style="left:817px;top:347px" width="14" height="14"><rect x="0.5" y="0.5" width="13" height="13" fill="none" stroke="#c8c8c8"/><g fill="#888"><rect x="3" y="2.5" width="1.5" height="9"/><rect x="6.2" y="2.5" width="1.5" height="9"/><rect x="9.4" y="2.5" width="1.5" height="9"/></g></svg><div class="t" style="left:832px;top:348px">Channels</div><svg class="a" style="left:881px;top:348px" width="15" height="12"><rect x="1" y="1" width="13" height="3.4" fill="#c8c8c8"/><rect x="3.5" y="1" width="1" height="1" fill="#3a3a3a"/><rect x="6" y="1" width="1" height="1" fill="#3a3a3a"/><rect x="8.5" y="1" width="1" height="1" fill="#3a3a3a"/><rect x="11" y="1" width="1" height="1" fill="#3a3a3a"/><path d="M2.3,9.8 Q7.5,2.2 12.7,9.8" fill="none" stroke="#c8c8c8" stroke-width="1.7" stroke-linecap="round"/></svg><div class="t" style="left:896px;top:347px">Paths</div><svg class="a" style="left:948px;top:347px" width="12" height="12"><rect x="1.5" y="1.5" width="10" height="10" fill="#3a3a3a" stroke="#aaa"/><polygon points="9,3.5 9,9.5 4,6.5" fill="#bbb"/></svg><div class="a" style="left:877px;top:341px;width:53px;height:23px;border:2px solid #ff0000"></div><div class="a" style="left:759px;top:365px;width:2px;height:3px;background:#aaa"></div><div class="a" style="left:759px;top:370px;width:2px;height:3px;background:#aaa"></div><div class="a" style="left:759px;top:375px;width:2px;height:3px;background:#aaa"></div><div class="a" style="left:759px;top:380px;width:2px;height:3px;background:#aaa"></div><div class="t" style="left:764px;top:372px">Lock:</div><svg class="a" style="left:794px;top:369px" width="15" height="16"><path d="M2.5,2.5 V14.5" stroke="#c8c8c8" stroke-width="1"/><path d="M2.5,4.5 Q6,1.2 10.5,2.5" fill="none" stroke="#c8c8c8" stroke-width="1"/><rect x="1.2" y="1.5" width="2.6" height="2.4" fill="#c8c8c8"/><rect x="1.2" y="7.5" width="2.6" height="2" fill="#c8c8c8"/><rect x="9.5" y="1" width="3" height="3" fill="#c8c8c8"/><rect x="9" y="8.5" width="5.5" height="6.5" fill="#c8c8c8"/><rect x="10.5" y="6.3" width="2.5" height="2.2" fill="#c8c8c8"/></svg><svg class="a" style="left:819px;top:370px" width="14" height="14"><path d="M7,1 V13 M1,7 H13" stroke="#c8c8c8" stroke-width="1.3"/><polygon points="7,0 9.5,3 4.5,3" fill="#c8c8c8"/><polygon points="7,14 9.5,11 4.5,11" fill="#c8c8c8"/><polygon points="0,7 3,4.5 3,9.5" fill="#c8c8c8"/><polygon points="14,7 11,4.5 11,9.5" fill="#c8c8c8"/></svg><div class="a" style="left:764px;top:389px;width:196px;height:25px;background:#1f1f1f"></div><div class="a" style="left:766px;top:391px;width:26px;height:22px;border:1px dotted #e0e0e0"></div><svg class="a" style="left:769px;top:395px" width="21" height="14"><path d="M0.5,8 C4,0 16,0 19.8,8 C15,14 5,14 0.5,8 z" fill="#c6c6c6"/><path d="M3,8 C6,2.8 14,2.8 17,8 C13,10.5 7,10.5 3,8 z" fill="#1f1f1f"/><circle cx="9.7" cy="7.3" r="3.9" fill="#1f1f1f"/><circle cx="8.6" cy="5.9" r="1.4" fill="#bdbdbd"/></svg><div class="a" style="left:823px;top:392px;width:34px;height:20px;background:#fff;border:1px solid #000"></div><svg class="a" style="left:823px;top:392px" width="35" height="20"><path d="M8,14 C8,5 28,5 28,14" fill="none" stroke="#777" stroke-width="0.9"/></svg><div class="t" style="left:860px;top:396px">Unnamed</div><div class="a" style="left:760px;top:386px;width:37px;height:34px;border:2px solid #ff0000"></div><svg class="a" style="left:600px;top:370px" width="165" height="35"><line x1="24" y1="15.9" x2="161" y2="25" stroke="#ff0000" stroke-width="2.7"/><polygon points="11,14.2 30.7,10 26.5,15.8 30.2,21.5" fill="#ff0000"/></svg><svg class="a" style="left:735px;top:585px" width="226" height="52"><g opacity="0.32"><text x="10" y="40" font-family="Liberation Sans" font-weight="bold" font-size="39" fill="#000" stroke="#000" stroke-width="1.3" stroke-linejoin="round">A</text><text x="78" y="40" font-family="Liberation Sans" font-weight="bold" font-size="39" fill="#000" stroke="#000" stroke-width="1.3" stroke-linejoin="round" letter-spacing="1.2">PUALS</text></g></svg><svg class="a" style="left:765px;top:575px" width="50" height="55"><path d="M8.5,30 L14,21 L33,12 L40,12 L40.5,24 L36,30 L33.5,38 L29,45 L22,51 L13,52.5 L12,45 Z" fill="#9f8866" stroke="#1c1c1c" stroke-width="1.4" stroke-linejoin="round"/><path d="M5.5,21 Q18,9 34.5,3.5 Q39,3 40,7 L40,11.5 L33,13 Q26,15 21.6,17.5 Q16,20 13.5,23 L13,29.5 L7.5,30.5 Z" fill="#2c7a2c" stroke="#1c1c1c" stroke-width="1.1" stroke-linejoin="round"/><path d="M21,17.8 Q27,14 34,13 L33.5,16 Q27,17 22,20 Z" fill="#b06a34"/><path d="M33.5,12.5 L40.5,12 L41,25 L35,26 Z" fill="#2b2b2b"/><ellipse cx="37.3" cy="22" rx="2.6" ry="4" fill="#bdbdbd" stroke="#1c1c1c" stroke-width="0.9"/><ellipse cx="22.5" cy="24.2" rx="4.2" ry="3.5" fill="#cfcfcf" stroke="#1c1c1c" stroke-width="1.2"/><ellipse cx="31.5" cy="20.8" rx="3.2" ry="3" fill="#cfcfcf" stroke="#1c1c1c" stroke-width="1.2"/><circle cx="22" cy="23.3" r="1.8" fill="#3a9ec0"/><circle cx="31" cy="20" r="1.5" fill="#3a9ec0"/><path d="M20,32.8 Q24,35.5 28,34 Q27,38.5 24,39 Q21.5,37 20,32.8 Z" fill="#d8d8d8" stroke="#1c1c1c" stroke-width="1"/><circle cx="11.5" cy="50.5" r="2" fill="#2a9cc0"/><circle cx="21" cy="51" r="1.8" fill="#2a9cc0"/></svg></body></html>
